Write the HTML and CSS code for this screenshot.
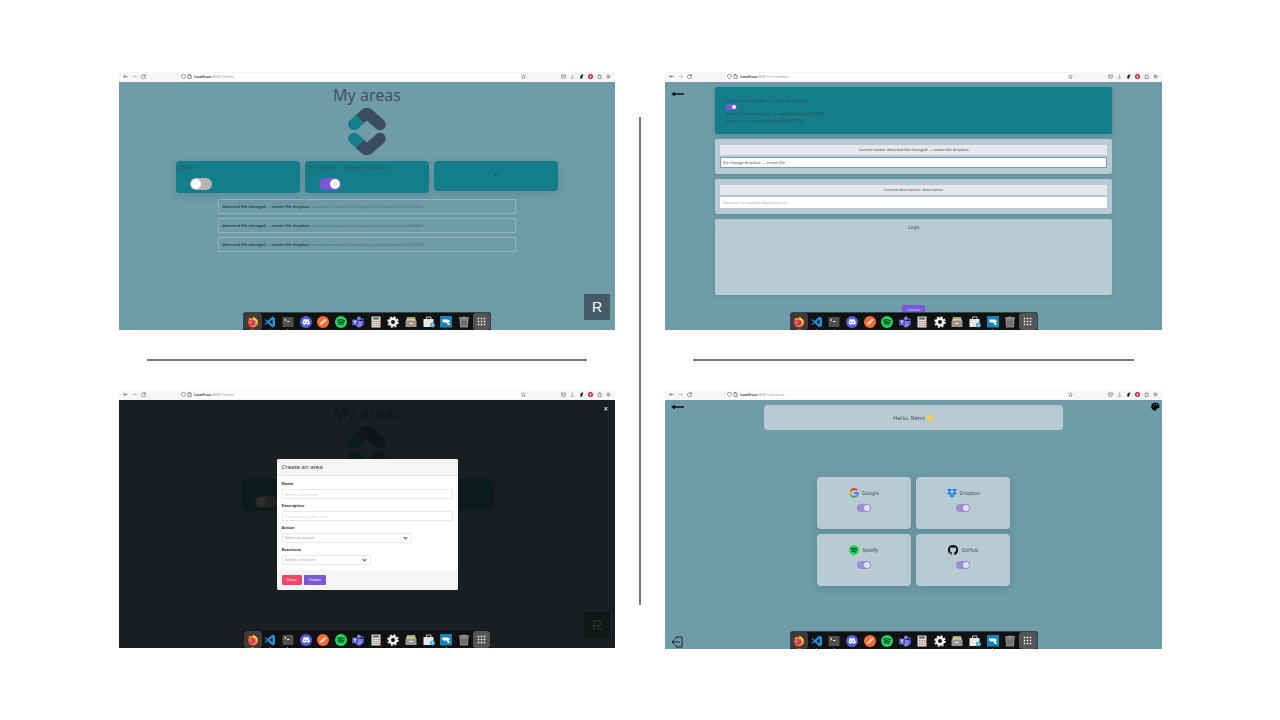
FILE: index.html
```html
<!DOCTYPE html>
<html lang="en">
<head>
<meta charset="utf-8">
<title>My areas</title>
<link rel="stylesheet" href="styles.css">
</head>
<body>
<svg class="sprite" aria-hidden="true">
  <symbol id="back" viewBox="0 0 10 10"><path d="M9 5H1.500M4.500 2L1.500 5l3 3" fill="none" stroke="currentColor" stroke-width="1.300"/></symbol>
  <symbol id="forward" viewBox="0 0 10 10"><path d="M1 5h7.500M5.500 2l3 3-3 3" fill="none" stroke="currentColor" stroke-width="1.300"/></symbol>
  <symbol id="reload" viewBox="0 0 10 10"><path d="M8.300 3.500A4 4 0 1 0 9 6M9 .8V4H5.800" fill="none" stroke="currentColor" stroke-width="1.300"/></symbol>
  <symbol id="shield" viewBox="0 0 10 10"><path d="M5 .8L8.700 2v3C8.700 7 7 8.700 5 9.300 3 8.700 1.300 7 1.300 5V2z" fill="none" stroke="currentColor" stroke-width="1.200"/></symbol>
  <symbol id="page" viewBox="0 0 10 10"><path d="M2 1h4l2.500 2.500V9H2zM5.500 1v3h3" fill="none" stroke="currentColor" stroke-width="1.200"/></symbol>
  <symbol id="star" viewBox="0 0 10 10"><path d="M5 1l1.200 2.700 2.900.3-2.200 2 .7 2.900L5 7.400 2.400 8.900l.7-2.900-2.200-2 2.900-.3z" fill="none" stroke="currentColor" stroke-width="1"/></symbol>
  <symbol id="pocket" viewBox="0 0 10 10"><path d="M1 2h8v3a4 4 0 0 1-8 0zM3 4.200l2 2 2-2" fill="none" stroke="currentColor" stroke-width="1.100"/></symbol>
  <symbol id="download" viewBox="0 0 10 10"><path d="M5 1v5.500M3 4.500l2 2 2-2M1 8.800h8" fill="none" stroke="#75a9de" stroke-width="1.300"/></symbol>
  <symbol id="fox" viewBox="0 0 10 10"><path d="M3 9.500L2.500 5l2-3L8.500.5 8 4 6.500 5.500 6.800 9z" fill="#151515"/></symbol>
  <symbol id="block" viewBox="0 0 10 10"><path d="M3 0h4l3 3v4l-3 3H3L0 7V3z" fill="#df2631"/><path d="M3.500 7.500V3h3v3L5.500 8z" fill="#fff"/></symbol>
  <symbol id="puzzle" viewBox="0 0 10 10"><path d="M2 3.500h2V2a1 1 0 0 1 2 0v1.500h2.500V9H2V7.500a1.200 1.200 0 0 0 0-2z" fill="none" stroke="currentColor" stroke-width="1.100"/></symbol>
  <symbol id="menu" viewBox="0 0 10 10"><path d="M1.500 2.500h7M1.500 5h7M1.500 7.500h7" stroke="currentColor" stroke-width="1.100"/></symbol>

  <symbol id="arrow" viewBox="0 0 13 6"><path d="M0 3l4-2.200v1.500h9v1.400H4v1.500z" fill="#0b0f10"/></symbol>
  <symbol id="leave" viewBox="0 0 12 12"><path d="M5 3V1h6v10H5V9M9 6H1M3.500 3.500L1 6l2.500 2.500" fill="none" stroke="#102329" stroke-width="1"/></symbol>
  <symbol id="palette" viewBox="0 0 10 10"><path d="M5 .7a4.400 4.400 0 1 0 .5 8.700c1-.3-.2-1.700 1-2.300 1.200-.4 2.800.3 3-1.600C9.800 2.700 7.700.7 5 .7z" fill="#05090a"/><g fill="#709ba8"><circle cx="2.700" cy="5" r=".6"/><circle cx="3.700" cy="2.900" r=".6"/><circle cx="6" cy="2.500" r=".6"/><circle cx="7.700" cy="4.200" r=".6"/></g></symbol>
  <symbol id="logo" viewBox="0 0 38 47"><g fill="none" stroke="#3a4d5c" stroke-width="11.500" stroke-linejoin="round" stroke-linecap="round"><path d="M12 11L17.200 6.400Q19 5 20.800 6.400L32 16.500"/><path d="M12 36L17.200 40.600Q19 42 20.800 40.600L32 30.500"/></g><g fill="none" stroke="#709ba8" stroke-width="14"><path d="M1 21.500L11.200 12.200M1 25.500L11.200 34.800"/></g><g fill="none" stroke="#147d8a" stroke-width="11.500"><path d="M6 16.500L12 11.100M6 30.500L12 35.900"/></g><g fill="#147d8a"><circle cx="6" cy="16.500" r="5.750"/><circle cx="6" cy="30.500" r="5.750"/></g></symbol>
  <symbol id="wave" viewBox="0 0 12 12"><path d="M2 6L1 3.500l1-.7 1.200 1.500L2.800 1.500l1.200-.3 1.400 3L5.700 1l1.200.2.7 4 1.200-2 1.200.5-.5 4.600Q7.500 11.500 4.500 10z" fill="#f7d04f" stroke="#f7d04f"/><path d="M9 1l2 2M8.500 11l2-1.500" stroke="#b8bd91" stroke-width=".8"/></symbol>

  <symbol id="firefox" viewBox="0 0 24 24"><circle cx="12" cy="13" r="10" fill="#f33c45"/><path d="M3 8L5 3l4 4 4-6c1 4 9 4 9 13-2 8-12 11-18 5C9 22 17 20 17 14s-4-6-6-6z" fill="#ff9d21"/><circle cx="11.500" cy="13" r="4" fill="#7941d3"/><path d="M3 10c5-2 6 1 10 1-1 3-5 2-5 5-5 0-6-3-5-6z" fill="#ff6b2b"/><path d="M14 2c2 4 8 4 7 13-1-4-3-7-7-8z" fill="#ffe14a"/></symbol>
  <symbol id="code" viewBox="0 0 24 24"><path d="M17 1l5 3v16l-5 3L7 14l-4 4-2-2 5-4-5-4 2-2 4 4zm0 6l-6 5 6 5z" fill="#1f94d9"/></symbol>
  <symbol id="terminal" viewBox="0 0 24 24"><rect x="1" y="2" width="22" height="20" rx="1" fill="#50504f"/><path d="M5 6l3 2-3 2M10 11h5" stroke="#fff" stroke-width="1.700" fill="none"/></symbol>
  <symbol id="discord" viewBox="0 0 24 24"><circle cx="12" cy="12" r="12" fill="#5560dc"/><path d="M7 7l3-1 .6 1h2.800l.6-1 3 1 3 8-4 3-1.500-2h-3L9 18l-4-3z" fill="#fff"/><circle cx="9.500" cy="12.500" r="1.500" fill="#5560dc"/><circle cx="14.500" cy="12.500" r="1.500" fill="#5560dc"/></symbol>
  <symbol id="postman" viewBox="0 0 24 24"><circle cx="12" cy="12" r="12" fill="#ff6c37"/><path d="M6 18l2-5 8-7 3 2-8 8z" fill="#fff"/><path d="M8 15l8-7" stroke="#ff8c62" stroke-width="1.500"/></symbol>
  <symbol id="spotify" viewBox="0 0 24 24"><circle cx="12" cy="12" r="12" fill="#1ed760"/><path d="M5 8.500c5-1.500 10-1 14 1M6 12.500c4-1.200 8-.8 12 1M7 16c3-.8 6-.5 9 1" fill="none" stroke="#102d19" stroke-width="2.200" stroke-linecap="round"/></symbol>
  <symbol id="teams" viewBox="0 0 24 24"><circle cx="14" cy="5" r="4" fill="#7b83eb"/><circle cx="21" cy="7" r="2.500" fill="#5059c9"/><path d="M17 10h7v6q-1 5-6 4z" fill="#5059c9"/><path d="M8 10h12v7q-1 6-6 6t-6-6z" fill="#7b83eb"/><rect y="7" width="12" height="12" rx="1" fill="#4b53bc"/><path d="M3 10h6M6 10v7" stroke="#fff" stroke-width="1.800"/></symbol>
  <symbol id="calculator" viewBox="0 0 24 24"><path d="M3 1h18v22H3z" fill="#deded8"/><path d="M6 3h12v4H6z" fill="#536b62"/><path d="M6 11h3m2 0h3M6 15h3m2 0h3M6 19h3m2 0h3" stroke="#888" stroke-width="2"/><path d="M16 11h3m-3 4h3m-3 4h3" stroke="#e97136" stroke-width="2"/></symbol>
  <symbol id="gear" viewBox="0 0 24 24"><circle cx="12" cy="12" r="6.500" fill="none" stroke="#f0f0ee" stroke-width="5"/><circle cx="12" cy="12" r="9.800" fill="none" stroke="#f0f0ee" stroke-width="3.500" stroke-dasharray="4 3.700"/></symbol>
  <symbol id="files" viewBox="0 0 24 24"><path d="M4 2h16l2 9H2z" fill="#5db5a0"/><path d="M4 5h16l2 6H2z" fill="#f2c75b"/><rect x="1" y="9" width="22" height="13" rx="1" fill="#969792"/><path d="M9 15h6" stroke="#fff" stroke-width="2"/></symbol>
  <symbol id="software" viewBox="0 0 24 24"><path d="M7 7V2h9v5" fill="none" stroke="#bfc3c3" stroke-width="2"/><rect x="1" y="6" width="20" height="16" rx="1" fill="#e7e8e6"/><circle cx="19" cy="18" r="5" fill="#41a5ce"/><path d="M19 15v5m-2-2l2 2 2-2" stroke="#fff" fill="none"/></symbol>
  <symbol id="workbench" viewBox="0 0 24 24"><rect width="24" height="23" rx="1" fill="#1685b7"/><path d="M4 7h12q4 1 4 5h-3l3 6h-4l-3-5H8q-4-1-4-6z" fill="#fff"/></symbol>
  <symbol id="trash" viewBox="0 0 24 24"><path d="M2 4h20M8 3h8" stroke="#999" stroke-width="3"/><path d="M3 5h18l-1 18H4z" fill="#858585"/><path d="M8 9v11m4-11v11m4-11v11" stroke="#505050" stroke-width="1.500"/></symbol>
  <symbol id="apps" viewBox="0 0 24 24"><path d="M2 2h4v4H2zm8 0h4v4h-4zm8 0h4v4h-4zM2 10h4v4H2zm8 0h4v4h-4zm8 0h4v4h-4zM2 18h4v4H2zm8 0h4v4h-4zm8 0h4v4h-4z" fill="#fff"/></symbol>
  <symbol id="google" viewBox="0 0 24 24"><g fill="none" stroke-width="4.600"><path d="M19.500 5.500A9.500 9.500 0 0 0 4 7.500" stroke="#ea4335"/><path d="M4 7.500a9.500 9.500 0 0 0 0 9" stroke="#fbbc05"/><path d="M4 16.500a9.500 9.500 0 0 0 14.500 2.400" stroke="#34a853"/><path d="M18.500 18.900q3-2.500 3-7.100H12" stroke="#4285f4"/></g></symbol>
  <symbol id="dropbox" viewBox="0 0 24 24"><path d="M6 1l6 4-6 4-6-4zm12 0l6 4-6 4-6-4zM6 9l6 4-6 4-6-4zm12 0l6 4-6 4-6-4zM12 15l6 4-6 4-6-4z" fill="#0a80f5"/></symbol>
  <symbol id="github" viewBox="0 0 24 24"><path d="M12 .3a12 12 0 0 0-3.800 23.400c.6.100.8-.3.800-.6v-2.200c-3.300.7-4-1.400-4-1.400-.6-1.400-1.300-1.800-1.300-1.800-1.100-.7.100-.7.100-.7 1.200.1 1.800 1.200 1.800 1.200 1.100 1.900 2.900 1.300 3.500 1 .1-.8.400-1.300.8-1.600-2.700-.3-5.500-1.300-5.500-6 0-1.200.5-2.300 1.300-3.100-.2-.4-.6-1.600 0-3.200 0 0 1-.3 3.400 1.200a11.500 11.500 0 0 1 6 0c2.300-1.500 3.300-1.200 3.300-1.200.6 1.600.2 2.800.1 3.200.8.800 1.200 1.900 1.200 3.100 0 4.700-2.800 5.700-5.500 6 .5.400.9 1.100.9 2.200v3.300c0 .3.100.7.800.6A12 12 0 0 0 12 .3" fill="#05090a"/></symbol>
</svg>

<main class="board">
  <section class="window" aria-label="Home">
    <header class="toolbar">
      <nav class="nav"><button aria-label="Back"><svg><use href="#back"/></svg></button><button class="dim" aria-label="Forward"><svg><use href="#forward"/></svg></button><button aria-label="Reload"><svg><use href="#reload"/></svg></button></nav>
      <div class="address"><svg><use href="#shield"/></svg><svg><use href="#page"/></svg><span class="url"><b>localhost</b>:8081/home</span><svg><use href="#star"/></svg></div>
      <nav class="tools"><button aria-label="Pocket"><svg><use href="#pocket"/></svg></button><button aria-label="Downloads"><svg><use href="#download"/></svg></button><button aria-label="Extension"><svg><use href="#fox"/></svg></button><button aria-label="Blocker"><svg><use href="#block"/></svg></button><button aria-label="Extensions"><svg><use href="#puzzle"/></svg></button><button aria-label="Menu"><svg><use href="#menu"/></svg></button></nav>
    </header>
    <div class="screen home">
      <h1>My areas</h1>
      <svg class="logo"><use href="#logo"/></svg>
      <div class="areas">
        <article class="area"><label for="a1">gfdsgs</label><input class="toggle" id="a1" type="checkbox"></article>
        <article class="area"><label for="a2">file changed → create file dropbox</label><input class="toggle" id="a2" type="checkbox" checked></article>
        <button class="area add" aria-label="Add an area">+</button>
      </div>
      <ul class="logs">
        <li><b>detected file changed → create file dropbox</b> La reaction create a file dropbox a été déclenchée à 14:38:53.</li>
        <li><b>detected file changed → create file dropbox</b> La reaction create a file dropbox a été déclenchée à 14:38:56.</li>
        <li><b>detected file changed → create file dropbox</b> La reaction create a file dropbox a été déclenchée à 14:38:58.</li>
      </ul>
      <button class="avatar">R</button>
      <nav class="dock" aria-label="Dock">
        <button class="lit run two" aria-label="Firefox"><svg><use href="#firefox"/></svg></button><button class="run" aria-label="Code"><svg><use href="#code"/></svg></button><button class="run" aria-label="Terminal"><svg><use href="#terminal"/></svg></button><button aria-label="Discord"><svg><use href="#discord"/></svg></button><button aria-label="Postman"><svg><use href="#postman"/></svg></button><button aria-label="Spotify"><svg><use href="#spotify"/></svg></button><button aria-label="Teams"><svg><use href="#teams"/></svg></button><button aria-label="Calculator"><svg><use href="#calculator"/></svg></button><button aria-label="Settings"><svg><use href="#gear"/></svg></button><button aria-label="Files"><svg><use href="#files"/></svg></button><button aria-label="Software"><svg><use href="#software"/></svg></button><button class="run" aria-label="Workbench"><svg><use href="#workbench"/></svg></button><button aria-label="Trash"><svg><use href="#trash"/></svg></button><button class="lit apps" aria-label="Applications"><svg><use href="#apps"/></svg></button>
      </nav>
    </div>
  </section>

  <div class="divider"></div>

  <section class="window" aria-label="Area editor">
    <header class="toolbar">
      <nav class="nav"><button aria-label="Back"><svg><use href="#back"/></svg></button><button class="dim" aria-label="Forward"><svg><use href="#forward"/></svg></button><button aria-label="Reload"><svg><use href="#reload"/></svg></button></nav>
      <div class="address"><svg><use href="#shield"/></svg><svg><use href="#page"/></svg><span class="url"><b>localhost</b>:8081/areaeditor</span><svg><use href="#star"/></svg></div>
      <nav class="tools"><button aria-label="Pocket"><svg><use href="#pocket"/></svg></button><button aria-label="Downloads"><svg><use href="#download"/></svg></button><button aria-label="Extension"><svg><use href="#fox"/></svg></button><button aria-label="Blocker"><svg><use href="#block"/></svg></button><button aria-label="Extensions"><svg><use href="#puzzle"/></svg></button><button aria-label="Menu"><svg><use href="#menu"/></svg></button></nav>
    </header>
    <div class="screen editor">
      <a class="return" href="#" aria-label="Go back"><svg><use href="#arrow"/></svg></a>
      <article class="summary">
        <label for="e1">detected file changed → create file dropbox</label>
        <input class="toggle small" id="e1" type="checkbox" checked>
        <p>Action : On detecting file changed dropbox [ACTION]</p>
        <p>Reaction : create file dropbox [REACTION]</p>
      </article>
      <div class="edit"><label for="nm">Current name: detected file changed → create file dropbox</label><input class="focus" id="nm" type="text" value="file change dropbox → create file"></div>
      <div class="edit"><label for="ds">Current description: description</label><input id="ds" type="text" placeholder="Saisissez la nouvelle description ici"></div>
      <section class="history"><h2>Logs</h2></section>
      <button class="update">Update</button>
      <nav class="dock" aria-label="Dock">
        <button class="lit run two" aria-label="Firefox"><svg><use href="#firefox"/></svg></button><button class="run" aria-label="Code"><svg><use href="#code"/></svg></button><button class="run" aria-label="Terminal"><svg><use href="#terminal"/></svg></button><button aria-label="Discord"><svg><use href="#discord"/></svg></button><button aria-label="Postman"><svg><use href="#postman"/></svg></button><button aria-label="Spotify"><svg><use href="#spotify"/></svg></button><button aria-label="Teams"><svg><use href="#teams"/></svg></button><button aria-label="Calculator"><svg><use href="#calculator"/></svg></button><button aria-label="Settings"><svg><use href="#gear"/></svg></button><button aria-label="Files"><svg><use href="#files"/></svg></button><button aria-label="Software"><svg><use href="#software"/></svg></button><button class="run" aria-label="Workbench"><svg><use href="#workbench"/></svg></button><button aria-label="Trash"><svg><use href="#trash"/></svg></button><button class="lit apps" aria-label="Applications"><svg><use href="#apps"/></svg></button>
      </nav>
    </div>
  </section>

  <div class="rule left"></div>
  <div class="rule right"></div>

  <section class="window" aria-label="Create an area">
    <header class="toolbar">
      <nav class="nav"><button aria-label="Back"><svg><use href="#back"/></svg></button><button class="dim" aria-label="Forward"><svg><use href="#forward"/></svg></button><button aria-label="Reload"><svg><use href="#reload"/></svg></button></nav>
      <div class="address"><svg><use href="#shield"/></svg><svg><use href="#page"/></svg><span class="url"><b>localhost</b>:8081/home</span><svg><use href="#star"/></svg></div>
      <nav class="tools"><button aria-label="Pocket"><svg><use href="#pocket"/></svg></button><button aria-label="Downloads"><svg><use href="#download"/></svg></button><button aria-label="Extension"><svg><use href="#fox"/></svg></button><button aria-label="Blocker"><svg><use href="#block"/></svg></button><button aria-label="Extensions"><svg><use href="#puzzle"/></svg></button><button aria-label="Menu"><svg><use href="#menu"/></svg></button></nav>
    </header>
    <div class="screen home">
      <h1>My areas</h1>
      <svg class="logo"><use href="#logo"/></svg>
      <div class="areas pair">
        <article class="area"><input class="toggle" type="checkbox" aria-label="Area"></article>
        <button class="area add" aria-label="Add an area"></button>
      </div>
      <button class="avatar">R</button>
      <div class="overlay">
        <button class="dismiss" aria-label="Close dialog">×</button>
        <form class="modal">
          <h2>Create an area</h2>
          <div class="fields">
            <div class="field"><label for="f1">Name</label><input id="f1" type="text" placeholder="Name of the area"></div>
            <div class="field"><label for="f2">Description</label><input id="f2" type="text" placeholder="Description of the area"></div>
            <div class="field"><label for="f3">Action</label><div class="pick wide"><select id="f3"><option>Select an action</option></select></div></div>
            <div class="field"><label for="f4">Reactions</label><div class="pick"><select id="f4"><option>Select a reaction</option></select></div></div>
          </div>
          <footer><button class="close" type="button">Close</button><button class="create" type="button">Create</button></footer>
        </form>
      </div>
      <nav class="dock" aria-label="Dock">
        <button class="lit run two" aria-label="Firefox"><svg><use href="#firefox"/></svg></button><button class="run" aria-label="Code"><svg><use href="#code"/></svg></button><button class="run" aria-label="Terminal"><svg><use href="#terminal"/></svg></button><button aria-label="Discord"><svg><use href="#discord"/></svg></button><button aria-label="Postman"><svg><use href="#postman"/></svg></button><button aria-label="Spotify"><svg><use href="#spotify"/></svg></button><button aria-label="Teams"><svg><use href="#teams"/></svg></button><button aria-label="Calculator"><svg><use href="#calculator"/></svg></button><button aria-label="Settings"><svg><use href="#gear"/></svg></button><button aria-label="Files"><svg><use href="#files"/></svg></button><button aria-label="Software"><svg><use href="#software"/></svg></button><button class="run" aria-label="Workbench"><svg><use href="#workbench"/></svg></button><button aria-label="Trash"><svg><use href="#trash"/></svg></button><button class="lit apps" aria-label="Applications"><svg><use href="#apps"/></svg></button>
      </nav>
    </div>
  </section>

  <section class="window last" aria-label="Account">
    <header class="toolbar">
      <nav class="nav"><button aria-label="Back"><svg><use href="#back"/></svg></button><button class="dim" aria-label="Forward"><svg><use href="#forward"/></svg></button><button aria-label="Reload"><svg><use href="#reload"/></svg></button></nav>
      <div class="address"><svg><use href="#shield"/></svg><svg><use href="#page"/></svg><span class="url"><b>localhost</b>:8081/account</span><svg><use href="#star"/></svg></div>
      <nav class="tools"><button aria-label="Pocket"><svg><use href="#pocket"/></svg></button><button aria-label="Downloads"><svg><use href="#download"/></svg></button><button aria-label="Extension"><svg><use href="#fox"/></svg></button><button aria-label="Blocker"><svg><use href="#block"/></svg></button><button aria-label="Extensions"><svg><use href="#puzzle"/></svg></button><button aria-label="Menu"><svg><use href="#menu"/></svg></button></nav>
    </header>
    <div class="screen account">
      <a class="return" href="#" aria-label="Go back"><svg><use href="#arrow"/></svg></a>
      <button class="theme" aria-label="Theme"><svg><use href="#palette"/></svg></button>
      <h1 class="hello">Hello, Rémi <svg><use href="#wave"/></svg></h1>
      <div class="services">
        <article class="service"><label for="s1"><svg><use href="#google"/></svg>Google</label><input class="toggle faded" id="s1" type="checkbox" checked></article>
        <article class="service"><label for="s2"><svg><use href="#dropbox"/></svg>Dropbox</label><input class="toggle faded" id="s2" type="checkbox" checked></article>
        <article class="service"><label for="s3"><svg><use href="#spotify"/></svg>Spotify</label><input class="toggle faded" id="s3" type="checkbox" checked></article>
        <article class="service"><label for="s4"><svg><use href="#github"/></svg>GitHub</label><input class="toggle faded" id="s4" type="checkbox" checked></article>
      </div>
      <button class="logout" aria-label="Log out"><svg><use href="#leave"/></svg></button>
      <nav class="dock" aria-label="Dock">
        <button class="lit run two" aria-label="Firefox"><svg><use href="#firefox"/></svg></button><button class="run" aria-label="Code"><svg><use href="#code"/></svg></button><button class="run" aria-label="Terminal"><svg><use href="#terminal"/></svg></button><button aria-label="Discord"><svg><use href="#discord"/></svg></button><button aria-label="Postman"><svg><use href="#postman"/></svg></button><button aria-label="Spotify"><svg><use href="#spotify"/></svg></button><button aria-label="Teams"><svg><use href="#teams"/></svg></button><button aria-label="Calculator"><svg><use href="#calculator"/></svg></button><button aria-label="Settings"><svg><use href="#gear"/></svg></button><button aria-label="Files"><svg><use href="#files"/></svg></button><button aria-label="Software"><svg><use href="#software"/></svg></button><button class="run" aria-label="Workbench"><svg><use href="#workbench"/></svg></button><button aria-label="Trash"><svg><use href="#trash"/></svg></button><button class="lit apps" aria-label="Applications"><svg><use href="#apps"/></svg></button>
      </nav>
    </div>
  </section>
</main>
</body>
</html>
```
FILE: styles.css
```css
* { box-sizing: border-box; }
body { margin: 0; background: #fff; color: #43545b; font: 4px/6px "Noto Sans", "Open Sans", sans-serif; }
h1, h2, p, ul { margin: 0; padding: 0; font-weight: 400; }
button, input, select { font: inherit; color: inherit; border: 0; margin: 0; padding: 0; background: none; }
svg { display: block; flex: none; }
.sprite { position: absolute; width: 0; height: 0; }

.board { display: grid; grid-template-columns: 496fr 50px 497fr; grid-template-rows: auto 60px auto; padding: 72px 118px 71px 119px; }
.divider { grid-column: 2; grid-row: 1 / 4; width: 2px; margin: 45px 0 44px 24px; background: #777; }
.rule { grid-row: 2; align-self: center; height: 2px; margin: 0 28px; background: #777; }
.rule.left { grid-column: 1; }
.rule.right { grid-column: 3; }
.window:nth-of-type(1) { grid-area: 1 / 1; }
.window:nth-of-type(2) { grid-area: 1 / 3; }
.window:nth-of-type(3) { grid-area: 3 / 1; }
.window:nth-of-type(4) { grid-area: 3 / 3; }

.toolbar { display: flex; align-items: center; height: 10px; padding: 0 4px 1px 3px; background: #f6f6f7; color: #555; }
.toolbar svg { width: 5px; height: 5px; }
.nav { display: flex; gap: 4px; width: 56px; padding-left: 1px; }
.dim { color: #bbb; }
.address { display: flex; flex: 1; align-items: center; gap: 1px; height: 8px; padding: 0 1px 0 2px; background: #fff; border: 1px solid #ededee; border-width: 0 1px; }
.url { flex: 1; padding-left: 1px; color: #999; }
.url b { color: #333; font-weight: 600; }
.tools { display: flex; gap: 4px; margin-left: 33px; }

.screen { position: relative; display: flex; flex-direction: column; align-items: center; min-height: 248px; background: #709ba8; }
.home h1 { padding-top: 2px; color: #43545b; font-size: 16px; line-height: 22px; }
.logo { width: 38px; height: 47px; margin-top: 2px; }
.areas { display: grid; grid-template-columns: 1fr 1fr 1fr; align-items: start; gap: 5px; width: 77%; margin-top: 6px; }
.areas.pair { grid-template-columns: 1fr 1fr; width: 51%; }
.area { display: flex; flex-direction: column; gap: 8px; min-height: 32px; padding: 3px 3px; border-radius: 4px; background: #147d8a; box-shadow: 0 3px 10px #3f7b8566; color: #2c5860; font-size: 5px; }
.area .toggle { margin-left: 11px; }
.pair .area { justify-content: flex-end; }
.area.add { align-items: center; justify-content: center; min-height: 30px; color: #2c4d55; font-size: 7px; font-weight: 700; }

.toggle { position: relative; flex: none; display: block; appearance: none; width: 22px; height: 12px; border-radius: 6px; background: #b5b5b5; }
.toggle::before { content: ""; position: absolute; top: 1px; left: 1px; width: 10px; height: 10px; border-radius: 5px; background: #fafafa; }
.toggle:checked { background: #7957d5; }
.toggle:checked::before { left: auto; right: 1px; }
.toggle.small { width: 11px; height: 6px; }
.toggle.small::before { width: 4px; height: 4px; }
.toggle.faded { width: 14px; height: 8px; background: #9c8ed3; }
.toggle.faded::before { width: 6px; height: 6px; background: #dfe3ef; }

.logs { display: flex; flex-direction: column; gap: 4px; width: 60%; margin-top: 6px; list-style: none; color: #4d7078; line-height: 5px; }
.logs li { padding: 4px 3px; border: 1px solid #8eb5bd; white-space: nowrap; }
.logs b { color: #294b53; }
.avatar { position: absolute; right: 5px; bottom: 10px; width: 26px; height: 26px; background: #455a67; color: #fff; font-family: "Liberation Sans", sans-serif; font-size: 14px; }

.dock { position: absolute; bottom: 0; left: 0; right: 0; display: flex; width: 248px; height: 18px; margin: 0 auto; padding: 0; border: 1px solid #2f474e; border-bottom: 0; border-radius: 3px 3px 0 0; background: #111; }
.overlay + .dock { border-color: #15191a; }
.dock button { position: relative; flex: 1; display: flex; align-items: center; justify-content: center; border-radius: 3px; }
.dock svg { width: 12px; height: 12px; }
.dock .lit { background: #3c3c3c; }
.dock .apps { background: #555; }
.dock .apps svg { width: 9px; height: 9px; }
.run::after { content: ""; position: absolute; bottom: 0; width: 1px; height: 1px; background: #e95420; }
.run.two::after { width: 3px; }

.return { position: absolute; top: 9px; left: 6px; }
.return svg { width: 13px; height: 6px; }
.editor { padding: 5px 50px 0; align-items: stretch; gap: 5px; }
.summary { display: flex; flex-direction: column; padding: 11px 11px 10px; border-radius: 2px; background: #147d8a; box-shadow: 0 1px 4px #3f7b8599; color: #2c4d55; }
.summary p { line-height: 7px; }
.edit { display: flex; flex-direction: column; gap: 2px; padding: 6px 5px; border-radius: 2px; background: #b8cbd2; box-shadow: 0 1px 4px #3f7b8566; }
.edit label { line-height: 10px; text-align: center; background: #e7e8ed; color: #444; font-size: 4px; }
.edit input { height: 11px; padding: 0 3px; background: #fff; color: #444; }
.edit .focus { border: 1px solid #6f9ecc; padding: 0 2px; }
::placeholder { color: #aaa; opacity: 1; }
.history { min-height: 76px; padding-top: 5px; border-radius: 2px; background: #b8cbd2; box-shadow: 0 1px 4px #3f7b8544; text-align: center; }
.history h2 { font-size: 5px; line-height: 6px; }
.update { align-self: center; width: 23px; height: 10px; margin-top: 5px; border-radius: 1px; background: #7957d5; color: #d9d0f5; }

.overlay { position: absolute; inset: 0; display: flex; justify-content: center; align-items: flex-start; padding-top: 59px; background: #0a0a0adb; }
.dismiss { position: absolute; top: 5px; right: 7px; color: #eee; font-size: 8px; line-height: 8px; }
.modal { width: 181px; border-radius: 2px; background: #fff; color: #363636; overflow: hidden; }
.modal h2 { padding: 4px 5px; background: #f5f5f5; border-bottom: 1px solid #e5e5e5; font-size: 6px; line-height: 8px; }
.fields { display: flex; flex-direction: column; gap: 4px; padding: 5px; }
.field { display: flex; flex-direction: column; gap: 2px; }
.field label { font-weight: 700; }
.field input, .field select { width: 100%; height: 10px; padding: 0 2px; border: 1px solid #e9e9e9; border-radius: 1px; background: #fff; }
.field input::placeholder { color: #d2d2d2; }
.field select { appearance: none; display: block; color: #999; }
.pick { position: relative; width: 89px; }
.pick.wide { width: 130px; }
.pick::after { content: ""; position: absolute; top: 3px; right: 5px; width: 3px; height: 3px; box-sizing: border-box; border: solid #554a8d; border-width: 0 1px 1px 0; transform: rotate(45deg); }
.modal footer { display: flex; gap: 2px; padding: 5px; background: #f5f5f5; }
.close, .create { height: 10px; padding: 0 5px; border-radius: 1px; background: #f14668; color: #fff; }
.create { background: #7957d5; }

.theme { position: absolute; top: 2px; right: 2px; }
.theme svg { width: 9px; height: 9px; }
.account { min-height: 249px; padding-top: 5px; }
.account .return { top: 4px; }
.hello { display: flex; align-items: center; justify-content: center; gap: 1px; width: 60%; height: 25px; border-radius: 4px; background: #b8cbd2; font-size: 6px; }
.hello svg { width: 8px; height: 8px; }
.services { display: grid; grid-template-columns: 1fr 1fr; gap: 5px; width: 39%; margin-top: 47px; }
.service { display: flex; flex-direction: column; align-items: center; gap: 6px; min-height: 52px; padding-top: 11px; border-radius: 4px; background: #b8cbd2; box-shadow: 0 2px 8px #3f7b8577; font-size: 5px; }
.service label { display: flex; align-items: center; gap: 3px; }
.service svg { width: 10px; height: 10px; }
.logout { position: absolute; bottom: 1px; left: 6px; }
.logout svg { width: 12px; height: 12px; }
```
